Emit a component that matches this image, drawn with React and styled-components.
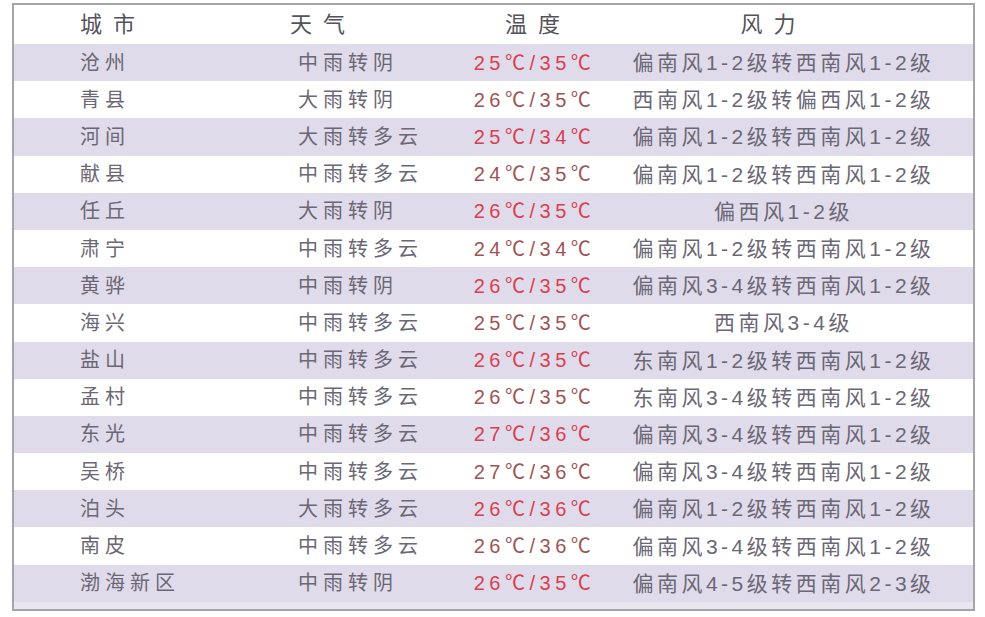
import React from 'react';
import styled, { createGlobalStyle } from 'styled-components';

const GlobalStyle = createGlobalStyle`
  html, body {
    margin: 0;
    padding: 0;
    background: #fff;
  }
  body {
    font-family: "Liberation Sans", "Noto Sans CJK SC", sans-serif;
  }
`;

const weatherData = [
  { city: '沧州', weather: '中雨转阴', temp: '25℃/35℃', wind: '偏南风1-2级转西南风1-2级' },
  { city: '青县', weather: '大雨转阴', temp: '26℃/35℃', wind: '西南风1-2级转偏西风1-2级' },
  { city: '河间', weather: '大雨转多云', temp: '25℃/34℃', wind: '偏南风1-2级转西南风1-2级' },
  { city: '献县', weather: '中雨转多云', temp: '24℃/35℃', wind: '偏南风1-2级转西南风1-2级' },
  { city: '任丘', weather: '大雨转阴', temp: '26℃/35℃', wind: '偏西风1-2级' },
  { city: '肃宁', weather: '中雨转多云', temp: '24℃/34℃', wind: '偏南风1-2级转西南风1-2级' },
  { city: '黄骅', weather: '中雨转阴', temp: '26℃/35℃', wind: '偏南风3-4级转西南风1-2级' },
  { city: '海兴', weather: '中雨转多云', temp: '25℃/35℃', wind: '西南风3-4级' },
  { city: '盐山', weather: '中雨转多云', temp: '26℃/35℃', wind: '东南风1-2级转西南风1-2级' },
  { city: '孟村', weather: '中雨转多云', temp: '26℃/35℃', wind: '东南风3-4级转西南风1-2级' },
  { city: '东光', weather: '中雨转多云', temp: '27℃/36℃', wind: '偏南风3-4级转西南风1-2级' },
  { city: '吴桥', weather: '中雨转多云', temp: '27℃/36℃', wind: '偏南风3-4级转西南风1-2级' },
  { city: '泊头', weather: '大雨转多云', temp: '26℃/36℃', wind: '偏南风1-2级转西南风1-2级' },
  { city: '南皮', weather: '中雨转多云', temp: '26℃/36℃', wind: '偏南风3-4级转西南风1-2级' },
  { city: '渤海新区', weather: '中雨转阴', temp: '26℃/35℃', wind: '偏南风4-5级转西南风2-3级' },
];

const Page = () => {
  return (
    <>
      <GlobalStyle />
      <SWrap>
        <STable>
          <SHeadRow>
            <SHeadCell>城市</SHeadCell>
            <SHeadCell $pad="10px">天气</SHeadCell>
            <SHeadCell $center>温度</SHeadCell>
            <SHeadCell $center $padRight="28px">风力</SHeadCell>
          </SHeadRow>
          {weatherData.map((row, i) => (
            <SRow key={row.city} $odd={i % 2 === 0}>
              <SCityCell>{row.city}</SCityCell>
              <SWeatherCell>{row.weather}</SWeatherCell>
              <STempCell $odd={i % 2 === 0}>{row.temp}</STempCell>
              <SWindCell>{row.wind}</SWindCell>
            </SRow>
          ))}
          <SFoot />
        </STable>
      </SWrap>
    </>
  );
};

export default Page;

const SWrap = styled.div`
  width: 985px;
  height: 617px;
  padding: 3px 0 0 12px;
  box-sizing: border-box;
  background: #fff;
`;

const STable = styled.div`
  width: 963px;
  height: 608px;
  box-sizing: border-box;
  border: 2px solid #a6a4ab;
  display: flex;
  flex-direction: column;
  background: #fff;
`;

const rowGrid = `
  display: grid;
  grid-template-columns: 266px 180px 145px 1fr;
  align-items: center;
  padding-right: 14px;
`;

const SHeadRow = styled.div`
  ${rowGrid}
  height: 39px;
  background: #fff;
`;

const SHeadCell = styled.div`
  font-size: 22px;
  color: #55525a;
  letter-spacing: 11px;
  padding-left: ${p => (p.$center ? '11px' : p.$pad || '66px')};
  padding-right: ${p => p.$padRight || '0'};
  text-align: ${p => (p.$center ? 'center' : 'left')};
  line-height: 1;
`;

const SRow = styled.div`
  ${rowGrid}
  height: 37.2px;
  background: ${p => (p.$odd ? '#e0dbea' : '#fff')};
  color: #6b6775;
  font-size: 20px;
  line-height: 1;
`;

const SCityCell = styled.div`
  padding-left: 66px;
  letter-spacing: 5px;
`;

const SWeatherCell = styled.div`
  padding-left: 18px;
  letter-spacing: 5px;
`;

const STempCell = styled.div`
  text-align: center;
  letter-spacing: 4.5px;
  padding-left: 4px;
  color: ${p => (p.$odd ? '#d8404f' : '#a05354')};
`;

const SWindCell = styled.div`
  text-align: center;
  font-size: 21px;
  letter-spacing: 3.5px;
  padding-left: 3px;
`;

const SFoot = styled.div`
  flex: 1;
  background: #e9e6ef;
`;
